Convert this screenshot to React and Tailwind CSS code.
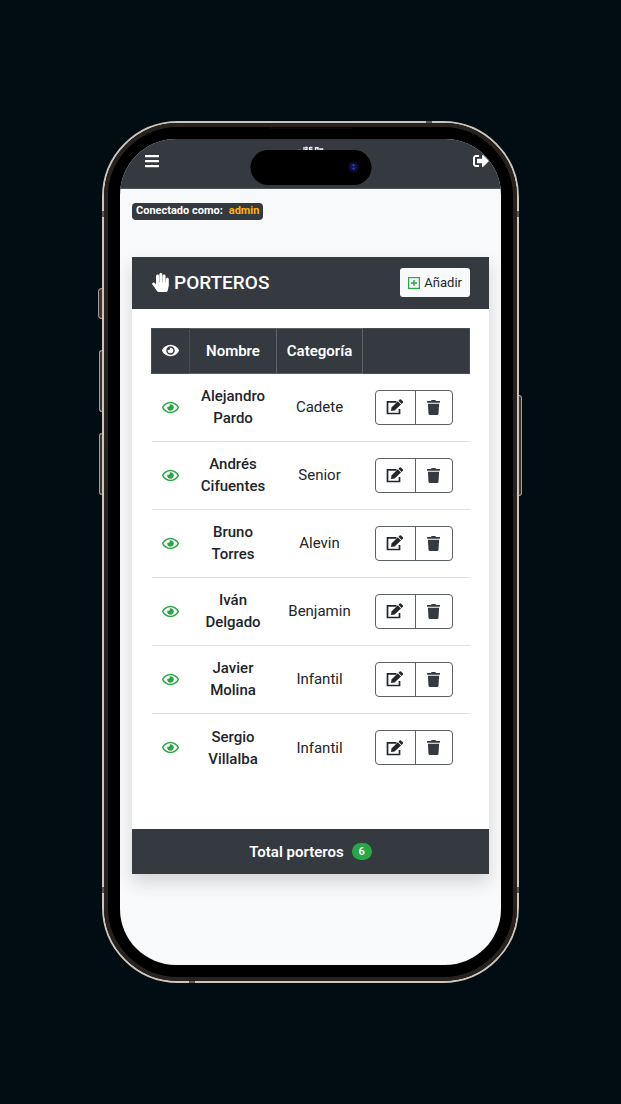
import React from "react";
import {
  FaBars,
  FaSignOutAlt,
  FaHandPaper,
  FaEye,
  FaRegEye,
  FaTrash,
} from "react-icons/fa";

const keepers = [
  { first: "Alejandro", last: "Pardo", category: "Cadete" },
  { first: "Andrés", last: "Cifuentes", category: "Senior" },
  { first: "Bruno", last: "Torres", category: "Alevin" },
  { first: "Iván", last: "Delgado", category: "Benjamin" },
  { first: "Javier", last: "Molina", category: "Infantil" },
  { first: "Sergio", last: "Villalba", category: "Infantil" },
];

function PlusSquare() {
  return (
    <svg viewBox="0 0 12 12" className="size-3 shrink-0" fill="none" stroke="#28a745" aria-hidden="true">
      <rect x="0.6" y="0.6" width="10.8" height="10.8" strokeWidth="1.2" />
      <path d="M6 3v6M3 6h6" strokeWidth="1.4" />
    </svg>
  );
}

function EditIcon() {
  return (
    <svg viewBox="0 0 18 16" className="h-4 w-[18px]" aria-hidden="true">
      <path d="M10.500 2.900H1.500v11.600h12V10" fill="none" stroke="#23272b" strokeWidth="1.700" />
      <path d="M5 12L5.500 8.600L11.800 2.300L15 5.500L8.600 11.600Z" fill="#23272b" />
      <path d="M12.500 1.700L13.600 0.600Q14.300 0 15 0.600L16.800 2.300Q17.400 3 16.800 3.700L15.600 4.900Z" fill="#23272b" />
    </svg>
  );
}

function Crest() {
  return (
    <svg viewBox="0 0 30 12" className="absolute left-1/2 top-[7px] h-3 w-[30px] -translate-x-1/2" fill="none" stroke="#e9ecef" aria-hidden="true">
      <path d="M2 4.500H4.500" strokeWidth="1.600" />
      <path d="M8 1V4.500M9 1.500H11.500M9 3.500H11.500M11 1V4.500M13.500 1V4.500M14 1.500H16.500M14 3.500H16.500" strokeWidth="1.400" />
      <path d="M19.500 4.500V1.800H22V4.500M24 4.500V3H26.500V4.500" strokeWidth="1.500" />
    </svg>
  );
}

function SideButtons() {
  return (
    <div aria-hidden="true">
      <div className="absolute -left-[6px] top-[165px] h-[31px] w-1 rounded-l-sm border border-r-0 border-[#a79d94] bg-[#39322e]" />
      <div className="absolute -left-[5px] top-[227px] h-[62px] w-[3px] rounded-l-sm border border-r-0 border-[#a79d94] bg-[#39322e]" />
      <div className="absolute -left-[5px] top-[310px] h-[62px] w-[3px] rounded-l-sm border border-r-0 border-[#a79d94] bg-[#39322e]" />
      <div className="absolute -right-[5px] top-[272px] h-[101px] w-[3px] rounded-r-sm border border-l-0 border-[#a79d94] bg-[#39322e]" />
      <div className="absolute -top-0.5 right-[85px] h-0.5 w-1.5 bg-[#5a5654]" />
      <div className="absolute -bottom-0.5 left-[85px] h-0.5 w-1.5 bg-[#5a5654]" />
      <div className="absolute -left-0.5 top-[88px] h-1.5 w-0.5 bg-[#5a5654]" />
      <div className="absolute -right-0.5 top-[88px] h-1.5 w-0.5 bg-[#5a5654]" />
      <div className="absolute -left-0.5 bottom-[88px] h-1.5 w-0.5 bg-[#5a5654]" />
      <div className="absolute -right-0.5 bottom-[88px] h-1.5 w-0.5 bg-[#5a5654]" />
      <div className="absolute left-1/2 top-1 h-0.5 w-[82px] -translate-x-1/2 bg-[#0c0b0a]" />
    </div>
  );
}

function DynamicIsland() {
  return (
    <div className="absolute left-1/2 top-[11px] z-10 flex h-[35px] w-[121px] -translate-x-1/2 items-center justify-end rounded-full bg-black pr-3">
      <svg viewBox="0 0 12 12" className="size-3" aria-hidden="true">
        <circle cx="6" cy="6" r="5.500" fill="#090a24" />
        <circle cx="6" cy="6" r="3.500" fill="#12145a" />
        <circle cx="6" cy="4" r="1" fill="#3c46b4" />
        <circle cx="6" cy="7.500" r="1" fill="#3c46b4" />
      </svg>
    </div>
  );
}

function Navbar() {
  return (
    <header className="relative flex h-[50px] items-start justify-between border-b border-[#50555a] bg-[#343a40] pl-6 pr-3 pt-3.5 text-white">
      <button type="button" aria-label="Menú">
        <FaBars className="size-4" />
      </button>
      <Crest />
      <button type="button" aria-label="Salir">
        <FaSignOutAlt className="size-4" />
      </button>
    </header>
  );
}

function KeepersTable() {
  return (
    <table className="w-full table-fixed border-collapse text-center text-[15px] leading-[22px] text-[#212529]">
      <colgroup>
        <col className="w-[38px]" />
        <col className="w-[87px]" />
        <col className="w-[86px]" />
        <col />
      </colgroup>
      <thead>
        <tr className="h-[45px] bg-[#343a40] text-white">
          <th scope="col" className="border border-[#454d55]">
            <FaEye className="mx-auto size-[17px]" aria-label="Visible" />
          </th>
          <th scope="col" className="border border-[#5c636a] font-semibold">Nombre</th>
          <th scope="col" className="border border-[#5c636a] font-semibold">Categoría</th>
          <th scope="col" className="border border-[#454d55]" aria-label="Acciones" />
        </tr>
      </thead>
      <tbody>
        {keepers.map((k) => (
          <tr key={k.first} className="h-[68px] border-b border-[#dee2e6] last:border-b-0">
            <td>
              <FaRegEye className="mx-auto size-[17px] text-[#28a745]" aria-label="Visible" />
            </td>
            <td className="font-medium">
              {k.first}
              <br />
              {k.last}
            </td>
            <td>{k.category}</td>
            <td className="pl-3 text-left">
              <div className="inline-flex h-[35px] divide-x divide-[#5c6166] rounded border border-[#5c6166] align-middle">
                <button type="button" aria-label={"Editar " + k.first} className="flex w-10 items-center justify-center">
                  <EditIcon />
                </button>
                <button type="button" aria-label={"Eliminar " + k.first} className="flex w-9 items-center justify-center text-[#343a40]">
                  <FaTrash className="size-[15px]" />
                </button>
              </div>
            </td>
          </tr>
        ))}
      </tbody>
    </table>
  );
}

export default function App() {
  return (
    <main className="flex min-h-screen items-center justify-center bg-[#010d12] font-[Roboto,sans-serif]">
      <div className="relative w-full max-w-[417px] rounded-[76px] border-2 border-[#cdc4bb] bg-black">
        <div className="rounded-[74px] border-4 border-[#26221f] bg-black p-3">
          <div className="relative overflow-hidden rounded-[56px] bg-[#f8f9fa] pb-[91px]">
            <DynamicIsland />
            <Navbar />
            <div className="px-3 pt-3.5">
              <p className="flex h-[17px] w-fit items-center gap-1.5 rounded bg-[#343a40] px-1 text-[11px] font-bold text-white">
                Conectado como: <span className="text-[#ffb300]">admin</span>
              </p>
              <section className="mt-[37px] bg-white shadow-[0_8px_16px_rgba(0,0,0,0.15)]">
                <div className="flex h-[52px] items-center justify-between bg-[#343a40] px-[19px]">
                  <h1 className="flex items-center gap-1 text-[19px] font-medium text-white">
                    <FaHandPaper className="size-[19px]" />
                    PORTEROS
                  </h1>
                  <button type="button" className="flex h-[29px] items-center gap-1 rounded-[3px] bg-[#f8f9fa] px-2 text-[13px] text-[#212529]">
                    <PlusSquare />
                    Añadir
                  </button>
                </div>
                <div className="px-[19px] pb-12 pt-[19px]">
                  <KeepersTable />
                </div>
                <footer className="flex h-[45px] items-center justify-center gap-2 bg-[#343a40] text-[15px] font-semibold text-white">
                  Total porteros
                  <span className="flex h-[17px] w-5 items-center justify-center rounded-full bg-[#28a745] text-[11px]">6</span>
                </footer>
              </section>
            </div>
          </div>
        </div>
        <SideButtons />
      </div>
    </main>
  );
}
